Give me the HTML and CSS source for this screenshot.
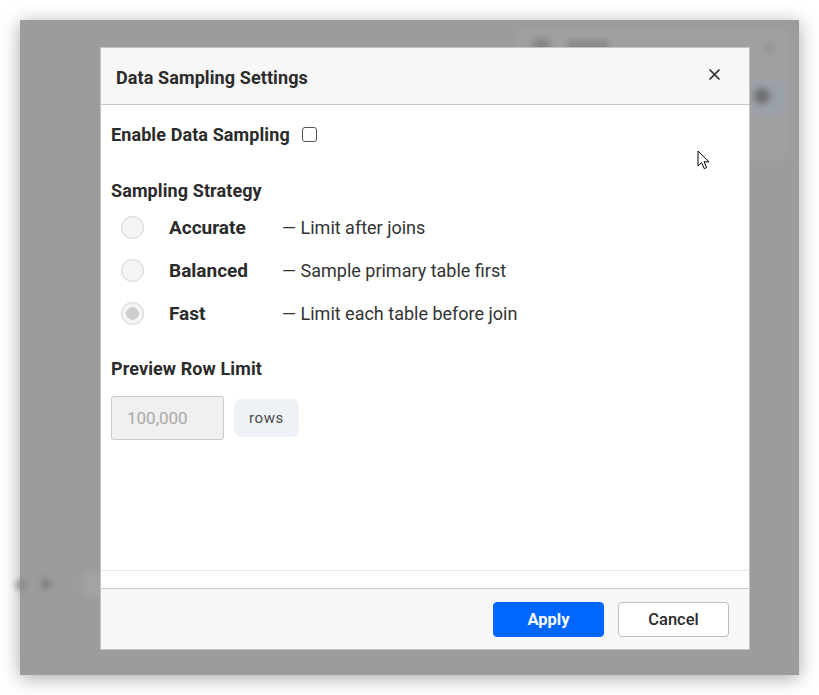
FILE: index.html
```html
<!DOCTYPE html>
<html lang="en">
  <head>
    <meta charset="UTF-8" />
    <meta name="viewport" content="width=device-width, initial-scale=1.0" />
    <title>Data Sampling Settings</title>
    <link rel="stylesheet" href="styles.css">
  </head>

  <body>
    <div class="window">
      <!-- blurred app behind the overlay -->
      <div class="behind">
        <div class="side-panel">
          <span class="blob avatar"></span>
          <span class="blob draft"></span>
          <span class="blob dot"></span>
          <div class="selected-row"><span class="blob knob"></span></div>
        </div>
        <div class="toolbar">
          <span class="blob tdot1"></span>
          <span class="blob tdot2"></span>
          <span class="blob tbox"></span>
        </div>
      </div>

      <div class="modal">
        <div class="modal-header">
          <h2>Data Sampling Settings</h2>
          <button class="close" aria-label="Close">
            <svg width="11" height="11" viewBox="0 0 11 11">
              <path d="M1 1 L10 10 M10 1 L1 10" stroke="#2b2b2b" stroke-width="1.7" stroke-linecap="round" />
            </svg>
          </button>
        </div>

        <div class="modal-body">
          <label class="enable">
            Enable Data Sampling
            <span class="checkbox"></span>
          </label>

          <div class="heading strategy">Sampling Strategy</div>
          <div class="radios">
            <div class="radio-row">
              <span class="radio"></span>
              <span class="radio-label">Accurate</span>
              <span class="radio-desc">— Limit after joins</span>
            </div>
            <div class="radio-row">
              <span class="radio"></span>
              <span class="radio-label">Balanced</span>
              <span class="radio-desc">— Sample primary table first</span>
            </div>
            <div class="radio-row">
              <span class="radio checked"></span>
              <span class="radio-label">Fast</span>
              <span class="radio-desc">— Limit each table before join</span>
            </div>
          </div>

          <div class="heading preview">Preview Row Limit</div>
          <div class="limit-row">
            <input class="limit" type="text" placeholder="100,000" disabled />
            <span class="unit">rows</span>
          </div>
        </div>
        <div class="body-gap"></div>

        <div class="modal-footer">
          <button class="btn primary">Apply</button>
          <button class="btn">Cancel</button>
        </div>
      </div>

      <svg class="cursor" width="14" height="21" viewBox="0 0 14 21">
        <path d="M1 1 L1 16 L4.6 12.6 L7.2 18.6 L9.6 17.6 L7 11.8 L12 11.8 Z" fill="#fff" stroke="#000" stroke-width="1" stroke-linejoin="round" />
      </svg>
    </div>
  </body>
</html>
```

FILE: styles.css
```css
* {
  box-sizing: border-box;
}
body {
  margin: 0;
  width: 819px;
  height: 695px;
  background-color: #fff;
  font-family: Roboto, "Liberation Sans", sans-serif;
  color: #2b2b2b;
  overflow: hidden;
}
.window {
  position: relative;
  margin: 20px;
  width: 779px;
  height: 655px;
  padding: 27px 0 0 80px;
  background-color: #9c9c9c;
  box-shadow: 0 3px 18px rgba(0, 0, 0, 0.35);
}

/* blurred background */
.behind {
  position: absolute;
  inset: 0;
  filter: blur(3px);
}
.blob {
  position: absolute;
  display: block;
  background-color: #858585;
  border-radius: 50%;
}
.side-panel {
  position: absolute;
  left: 495px;
  top: 8px;
  width: 276px;
  height: 132px;
  background-color: #a0a0a0;
  border-radius: 4px;
}
.avatar {
  left: 17px;
  top: 9px;
  width: 18px;
  height: 18px;
}
.draft {
  left: 52px;
  top: 12px;
  width: 42px;
  height: 11px;
  border-radius: 3px;
  background-color: #888;
}
.dot {
  left: 250px;
  top: 16px;
  width: 8px;
  height: 8px;
  background-color: #8e8e8e;
}
.selected-row {
  position: absolute;
  left: 236px;
  top: 52px;
  width: 34px;
  height: 34px;
  background-color: #9aa0aa;
}
.knob {
  left: 3px;
  top: 8px;
  width: 16px;
  height: 16px;
  background-color: #707070;
}
.toolbar {
  position: absolute;
  left: 0;
  top: 548px;
  width: 90px;
  height: 34px;
}
.tdot1 {
  left: -4px;
  top: 12px;
  width: 10px;
  height: 10px;
  background-color: #888;
}
.tdot2 {
  left: 21px;
  top: 11px;
  width: 10px;
  height: 10px;
  background-color: #7c7c7c;
}
.tbox {
  left: 63px;
  top: 4px;
  width: 18px;
  height: 24px;
  border-radius: 3px;
  background-color: #a4a4a4;
}

/* modal */
.modal {
  position: relative;
  display: flex;
  flex-direction: column;
  width: 650px;
  height: 603px;
  background-color: #fff;
  border: 1px solid #c4c4c4;
}
.modal-header {
  display: flex;
  align-items: center;
  justify-content: space-between;
  height: 57px;
  padding: 0 29px 0 15px;
  background-color: #f7f7f7;
  border-bottom: 1px solid #c8c8c8;
}
.modal-header h2 {
  margin: 2px 0 0;
  font-size: 18px;
  font-weight: 700;
  letter-spacing: 0.1px;
  color: #2b2b2b;
}
.close {
  display: flex;
  padding: 0;
  margin-top: -3px;
  border: none;
  background: none;
}
.modal-body {
  flex: 1;
  padding: 0 10px;
  border-bottom: 1px solid #e3ebf2;
}
.enable {
  display: flex;
  align-items: center;
  gap: 12px;
  height: 20px;
  margin-top: 19px;
  font-size: 18px;
  font-weight: 700;
  letter-spacing: 0.1px;
}
.checkbox {
  width: 15px;
  height: 15px;
  border: 1.5px solid #555;
  border-radius: 3px;
  background-color: #fff;
}
.heading {
  height: 20px;
  line-height: 20px;
  font-size: 18px;
  font-weight: 700;
  letter-spacing: 0.1px;
}
.strategy {
  margin-top: 37px;
}
.radios {
  margin-top: 5px;
}
.radio-row {
  display: flex;
  align-items: center;
  height: 43px;
  padding-left: 10px;
}
.radio {
  width: 23px;
  height: 23px;
  border: 1px solid #d2d2d2;
  border-radius: 50%;
  background-color: #f4f4f4;
}
.radio.checked {
  border-color: #cfcfcf;
  background: radial-gradient(circle, #cdcdcd 0 6px, #f4f4f4 6.5px);
}
.radio-label {
  width: 113px;
  margin-left: 25px;
  font-size: 19px;
  font-weight: 700;
}
.radio-desc {
  font-size: 18px;
  color: #333;
}
.preview {
  margin-top: 24px;
}
.limit-row {
  display: flex;
  align-items: center;
  gap: 10px;
  margin-top: 17px;
}
.limit {
  width: 113px;
  height: 44px;
  padding: 0 15px;
  font-family: inherit;
  font-size: 17px;
  background-color: #f0f0f0;
  border: 1px solid #cacaca;
  border-radius: 3px;
}
.limit::placeholder {
  color: #a8a8a8;
}
.unit {
  display: flex;
  align-items: center;
  height: 38px;
  padding: 0 15px;
  font-size: 15px;
  letter-spacing: 0.6px;
  color: #4a4a4a;
  background-color: #eef2f7;
  border-radius: 7px;
}
.body-gap {
  height: 17px;
}
.modal-footer {
  display: flex;
  align-items: center;
  justify-content: flex-end;
  gap: 14px;
  height: 61px;
  padding: 0 20px;
  background-color: #f7f7f7;
  border-top: 1px solid #c8c8c8;
}
.btn {
  width: 111px;
  height: 35px;
  font-family: inherit;
  font-size: 16.5px;
  font-weight: 500;
  color: #2b2b2b;
  background-color: #fff;
  border: 1px solid #bdbdbd;
  border-radius: 4px;
}
.btn.primary {
  font-weight: 700;
  color: #fff;
  background-color: #0066ff;
  border-color: #0066ff;
}
.cursor {
  position: absolute;
  left: 677px;
  top: 130px;
}
```
